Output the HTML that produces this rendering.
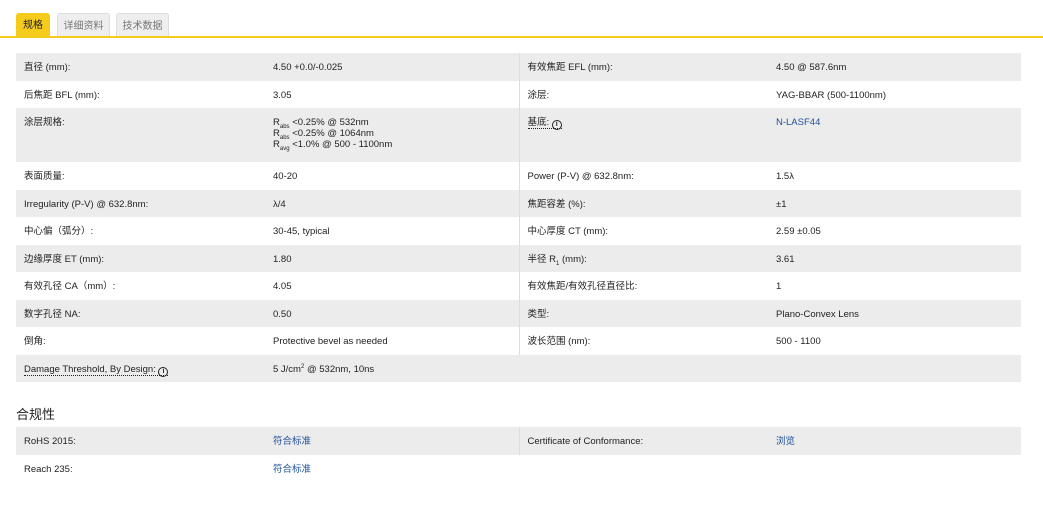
<!DOCTYPE html><html><head><meta charset="utf-8"><style>
body{margin:0;background:#fff;font-family:"Liberation Sans","Noto Sans CJK SC",sans-serif;font-size:9.5px;color:#222;width:1043px;height:507px;overflow:hidden;position:relative}
.tab{position:absolute;top:13px;height:23px;line-height:25px;font-size:10px;text-align:center;border-radius:3px 3px 0 0}
.line{position:absolute;left:0;top:36px;width:1043px;height:2px;background:#f5cc1c}
table{position:absolute;left:16px;border-collapse:collapse;width:1005px;table-layout:fixed}
td{padding:9px 8px 0 8px;vertical-align:top;height:27.5px;box-sizing:border-box;line-height:11px;white-space:nowrap}
tr.g td{background:#ececec}
td.c2{border-right:1px solid #ddd}
a{color:#1f4f9a;text-decoration:none}
.u{border-bottom:1px dotted #222}
.i{display:inline-block;width:8px;height:8px;border:1.3px solid #222;border-radius:50%;font-size:7px;line-height:8px;text-align:center;font-weight:bold;vertical-align:-1px}
sub,sup{font-size:6px;line-height:0}
h3{position:absolute;left:16px;top:404px;margin:0;font-size:13px;font-weight:normal}
</style></head><body>
<div class="tab" style="left:16px;width:34px;background:#f5cc1c;color:#222">规格</div>
<div class="tab" style="left:57px;width:51px;background:#eee;border:1px solid #ddd;color:#777">详细资料</div>
<div class="tab" style="left:116px;width:51px;background:#eee;border:1px solid #ddd;color:#777">技术数据</div>
<div class="line"></div>
<table style="top:53px">
<colgroup><col style="width:249px"><col style="width:254px"><col style="width:249px"><col></colgroup>
<tr class="g"><td class="c1">直径 (mm):</td><td class="c2">4.50 +0.0/-0.025</td><td class="c3">有效焦距 EFL (mm):</td><td>4.50 @ 587.6nm</td></tr>
<tr><td class="c1">后焦距 BFL (mm):</td><td class="c2">3.05</td><td class="c3">涂层:</td><td>YAG-BBAR (500-1100nm)</td></tr>
<tr class="g"><td class="c1" style="height:54px">涂层规格:</td><td class="c2" style="line-height:11px;padding-top:9px">R<sub>abs</sub> &lt;0.25% @ 532nm<br>R<sub>abs</sub> &lt;0.25% @ 1064nm<br>R<sub>avg</sub> &lt;1.0% @ 500 - 1100nm</td><td class="c3"><span class="u">基底: <span class="i">i</span></span></td><td><a>N-LASF44</a></td></tr>
<tr><td class="c1">表面质量:</td><td class="c2">40-20</td><td class="c3">Power (P-V) @ 632.8nm:</td><td>1.5λ</td></tr>
<tr class="g"><td class="c1">Irregularity (P-V) @ 632.8nm:</td><td class="c2">λ/4</td><td class="c3">焦距容差 (%):</td><td>±1</td></tr>
<tr><td class="c1">中心偏（弧分）:</td><td class="c2">30-45, typical</td><td class="c3">中心厚度 CT (mm):</td><td>2.59 ±0.05</td></tr>
<tr class="g"><td class="c1">边缘厚度 ET (mm):</td><td class="c2">1.80</td><td class="c3">半径 R<sub>1</sub> (mm):</td><td>3.61</td></tr>
<tr><td class="c1">有效孔径 CA（mm）:</td><td class="c2">4.05</td><td class="c3">有效焦距/有效孔径直径比:</td><td>1</td></tr>
<tr class="g"><td class="c1">数字孔径 NA:</td><td class="c2">0.50</td><td class="c3">类型:</td><td>Plano-Convex Lens</td></tr>
<tr><td class="c1">倒角:</td><td class="c2">Protective bevel as needed</td><td class="c3">波长范围 (nm):</td><td>500 - 1100</td></tr>
<tr class="g"><td class="c1"><span class="u">Damage Threshold, By Design: <span class="i">i</span></span></td><td class="c2" style="border-right:none">5 J/cm<sup>2</sup> @ 532nm, 10ns</td><td class="c3"></td><td></td></tr>
</table>
<h3>合规性</h3>
<table style="top:427px">
<colgroup><col style="width:249px"><col style="width:254px"><col style="width:249px"><col></colgroup>
<tr class="g"><td class="c1">RoHS 2015:</td><td class="c2"><a>符合标准</a></td><td class="c3">Certificate of Conformance:</td><td><a>浏览</a></td></tr>
<tr><td class="c1">Reach 235:</td><td class="c2" style="border-right:none"><a>符合标准</a></td><td class="c3"></td><td></td></tr>
</table>
</body></html>
